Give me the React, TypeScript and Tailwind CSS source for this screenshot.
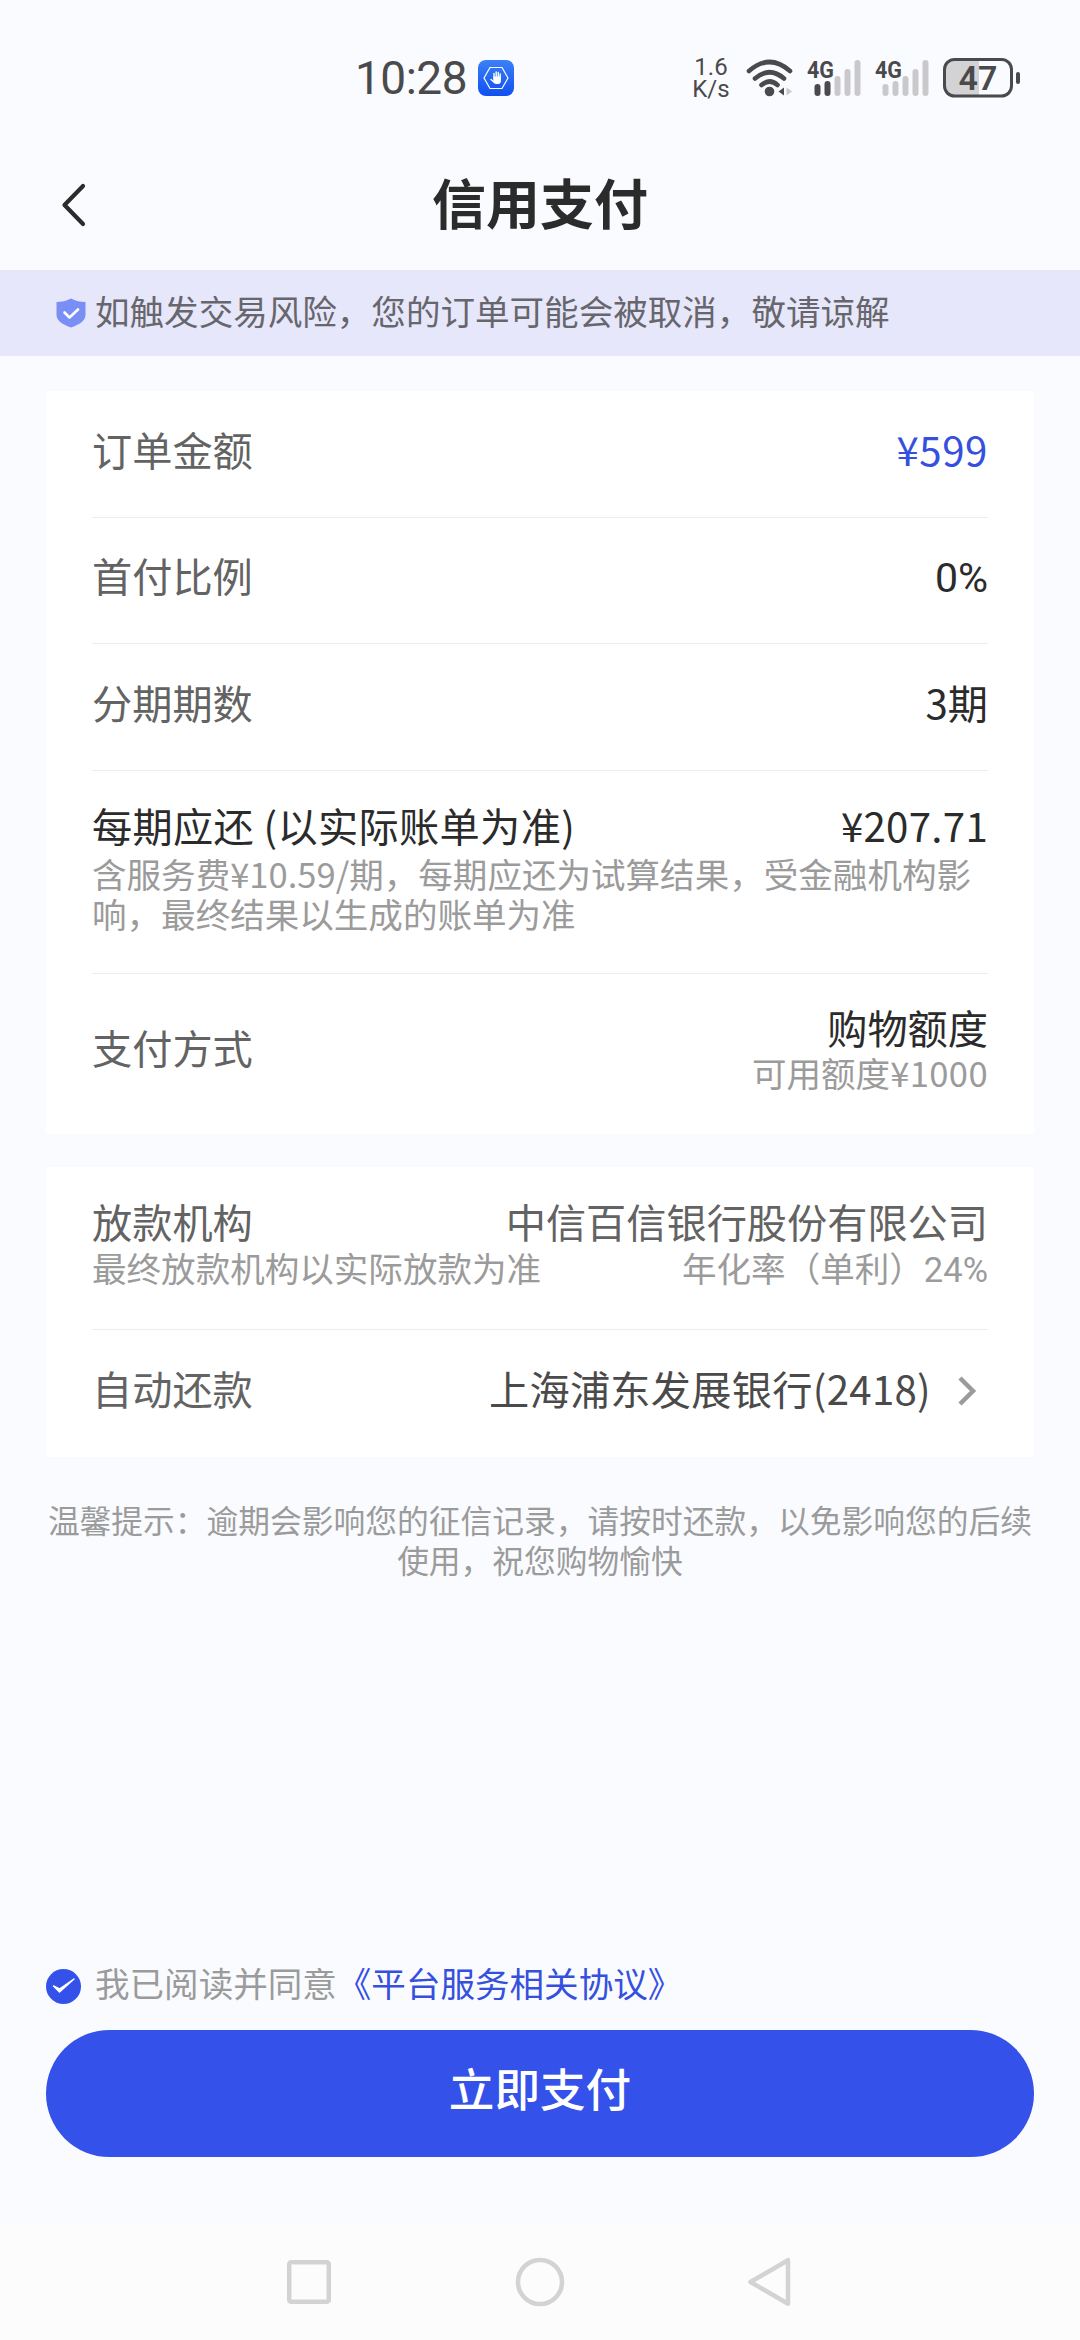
import type { ReactNode } from "react";

const DETAILS = [
  { label: "订单金额", value: "¥599", style: "text-[#3550de] tracking-[0.6px]" },
  { label: "首付比例", value: "0%", style: "pt-[5px] text-[#2b2b2b] text-[41px] font-[Roboto,sans-serif]" },
  { label: "分期期数", value: "3期", style: "text-[#2b2b2b]" },
];

const SIGNALS = [
  { id: "sim1", active: 2 },
  { id: "sim2", active: 0 },
];

const BARS = [12, 15, 20, 27, 36];

function Signal({ active }: { active: number }) {
  return (
    <svg className="overflow-visible" width="54" height="38" viewBox="0 0 54 38">
      <text
        x="0"
        y="19"
        fontSize="24"
        fontWeight="700"
        textLength="27"
        lengthAdjust="spacingAndGlyphs"
        fill="#4a4a4c"
      >
        4G
      </text>
      {BARS.map((h, i) => (
        <rect
          key={h}
          x={7.5 + i * 10}
          y={37 - h}
          width="6"
          height={h}
          rx="3"
          fill={i < active ? "#4a4a4c" : "#c9c9cb"}
        />
      ))}
    </svg>
  );
}

function StatusBar() {
  return (
    <div className="flex h-[135px] items-start pt-[56px] pl-[355px] text-[#4a4a4c] font-[Roboto,sans-serif]">
      <div className="flex h-[44px] w-[123px] items-center text-[46px] leading-none tracking-[-0.5px]">
        10:28
      </div>
      <svg className="mt-1" width="36" height="36" viewBox="0 0 36 36">
        <defs>
          <linearGradient id="app" x1="0" y1="0" x2="0" y2="1">
            <stop offset="0" stopColor="#3a80f8" />
            <stop offset="1" stopColor="#1050f0" />
          </linearGradient>
        </defs>
        <rect width="36" height="36" rx="8" fill="url(#app)" />
        <path d="M12 7.5h12l6 10.5-6 10.5H12L6 18z" fill="none" stroke="#fff" strokeWidth="1.2" />
        <path
          d="M16 18v-4.5M18.2 17v-5M20.3 17.5v-5M22.2 19v-5M13 19.5l3.5 3"
          stroke="#fff"
          strokeWidth="1.4"
          strokeLinecap="round"
        />
        <path d="M15.3 16.5h7.6v4.5q0 3-3 3h-1.7q-1.5 0-3-2z" fill="#fff" />
      </svg>
      <div className="ml-[178px] w-[38px] text-center text-[24px] leading-[22px]">
        <div>1.6</div>
        <div>K/s</div>
      </div>
      <svg className="ml-[16px] mt-[2px]" width="48" height="40" viewBox="0 0 48 40">
        <g fill="none" stroke="#4a4a4c" strokeWidth="4.6" strokeLinecap="round">
          <path d="M3 13q20.500-18 41 0" />
          <path d="M9 20.500q14.500-12.500 29 0" />
          <path d="M15.500 27q8-7 16 0" />
        </g>
        <circle cx="23.5" cy="33.5" r="4.8" fill="#4a4a4c" />
        <path d="M38 29.500v8l-5.500-4z" fill="#4a4a4c" />
        <path d="M40.500 29.500v8l5.500-4z" fill="#c9c9cb" />
      </svg>
      <div className="mt-[3px] ml-[13px] flex gap-[14px]">
        {SIGNALS.map((s) => (
          <Signal key={s.id} active={s.active} />
        ))}
      </div>
      <svg className="ml-[14px] mt-[2px]" width="80" height="40" viewBox="0 0 80 40">
        <path d="M12 2h24v36H12Q2 38 2 28V12Q2 2 12 2z" fill="#d3d3d5" />
        <rect x="1.5" y="1.5" width="67" height="36.5" rx="10" fill="none" stroke="#4a4a4c" strokeWidth="3" />
        <rect x="73" y="14" width="4" height="12" rx="2" fill="#4a4a4c" />
        <text x="35" y="32" fontSize="34" fontWeight="600" textAnchor="middle" fill="#4a4a4c">
          47
        </text>
      </svg>
    </div>
  );
}

function Header() {
  return (
    <header className="flex h-[135px] items-center justify-between px-[60px] text-[#2b2b2b]">
      <svg className="mt-[5px]" width="28" height="46" viewBox="0 0 28 46">
        <path
          d="M23 4L4.500 23 23 42"
          fill="none"
          stroke="currentColor"
          strokeWidth="4.2"
          strokeLinecap="round"
          strokeLinejoin="round"
        />
      </svg>
      <h1 className="pb-px text-[54px] leading-[70px] font-bold">信用支付</h1>
      <div className="w-[28px]" />
    </header>
  );
}

function Row({ className, children }: { className: string; children: ReactNode }) {
  return (
    <div className={`flex justify-between border-[#ececec] not-last:border-b ${className}`}>
      {children}
    </div>
  );
}

function Note({ children }: { children: ReactNode }) {
  return <div className="text-[34.55px] leading-[40px] text-[#9b9b9b]">{children}</div>;
}

export default function App() {
  return (
    <div className="flex h-[2340px] w-[1080px] flex-col overflow-hidden bg-[#fafbff] font-['Noto_Sans_CJK_SC',sans-serif]">
      <StatusBar />
      <Header />

      <div className="flex h-[86px] items-center bg-[#e6e7fa] pl-[55px] text-[34.55px] text-[#66666c]">
        <svg width="31" height="30" viewBox="0 0 31 30">
          <path d="M16 .5q6.500 3.500 14.500 3.500v13q0 7.500-14.500 12.500Q1.500 24.500 1.500 17V4Q9.500 4 16 .5z" fill="#7a8ff6" />
          <path
            d="M9.500 14.500l5 5 8.500-8"
            fill="none"
            stroke="#fff"
            strokeWidth="2.6"
            strokeLinecap="round"
            strokeLinejoin="round"
          />
        </svg>
        <span className="mb-[6px] ml-[9px] leading-[50px]">如触发交易风险，您的订单可能会被取消，敬请谅解</span>
      </div>

      <main className="mt-[35px] flex flex-col px-[46px] text-[40.2px] leading-[50px] text-[#636363]">
        <section className="bg-white px-[46px] whitespace-nowrap">
          {DETAILS.map((d) => (
            <Row key={d.label} className="h-[126.6px] items-center pb-[10px]">
              <span>{d.label}</span>
              <span className={d.style}>{d.value}</span>
            </Row>
          ))}
          <Row className="h-[203px] flex-col pt-[29px]">
            <div className="flex justify-between text-[#2b2b2b]">
              <span className="tracking-[0.35px]">每期应还 (以实际账单为准)</span>
              <span className="tracking-[0.3px]">¥207.71</span>
            </div>
            <div className="flex-1 pt-[3px] whitespace-normal">
              <Note>含服务费¥10.59/期，每期应还为试算结果，受金融机构影响，最终结果以生成的账单为准</Note>
            </div>
          </Row>
          <Row className="h-[160px] items-center pb-[14px]">
            <span>支付方式</span>
            <div className="text-right">
              <div className="text-[#2b2b2b]">购物额度</div>
              <Note>
                可用额度<span className="tracking-[0.4px]">¥1000</span>
              </Note>
            </div>
          </Row>
        </section>

        <section className="mt-[33px] bg-white px-[46px] whitespace-nowrap">
          <Row className="h-[163px] flex-col pt-[29px]">
            <div className="flex justify-between">
              <span>放款机构</span>
              <span>中信百信银行股份有限公司</span>
            </div>
            <div className="flex-1 pt-px">
              <Note>
                <div className="flex justify-between">
                  <span>最终放款机构以实际放款为准</span>
                  <span>
                    年化率（单利）<span className="font-[Roboto,sans-serif]">24%</span>
                  </span>
                </div>
              </Note>
            </div>
          </Row>
          <Row className="h-[127px] items-center pb-[10px]">
            <span>自动还款</span>
            <div className="flex items-center pr-[10px] text-[#4a4a4a]">
              <span className="tracking-[0.3px]">上海浦东发展银行(2418)</span>
              <svg className="mt-[5px] ml-[25px]" width="22" height="32" viewBox="0 0 22 32">
                <path d="M4 3l13 13L4 29" fill="none" stroke="#9b9b9b" strokeWidth="4.5" />
              </svg>
            </div>
          </Row>
        </section>

        <p className="mt-[42px] text-center text-[31.75px] leading-[40px] text-[#9b9b9b]">
          温馨提示：逾期会影响您的征信记录，请按时还款，以免影响您的后续使用，祝您购物愉快
        </p>
      </main>

      <footer className="mt-auto flex flex-col px-[46px] pb-[68px]">
        <div className="mb-[23px] flex h-[50px] items-center text-[34.55px] leading-[50px] text-[#9b9b9b]">
          <svg className="mt-[8px] mr-[14px]" width="35" height="35" viewBox="0 0 35 35">
            <circle cx="17.5" cy="17.5" r="17.5" fill="#3452ea" />
            <path d="M7.500 17l6 6L28 10 13.500 20z" fill="#fff" stroke="#fff" strokeWidth="1.5" strokeLinejoin="round" />
          </svg>
          <span>我已阅读并同意</span>
          <span className="text-[#3550de]">《平台服务相关协议》</span>
        </div>
        <button className="h-[127px] rounded-full bg-[#3452ea] pb-[12px] text-[45.6px] font-medium text-white">
          立即支付
        </button>
      </footer>

      <nav className="flex h-[115px] items-center justify-center gap-[182px] bg-[#fcfcfc] pb-[2px]">
        <svg width="48" height="50" viewBox="0 0 48 50">
          <rect x="4.2" y="5.2" width="39.6" height="39.6" rx="2" fill="none" stroke="#d3d3d3" strokeWidth="4.5" />
        </svg>
        <svg width="50" height="50" viewBox="0 0 50 50">
          <circle cx="25" cy="25" r="22" fill="none" stroke="#d3d3d3" strokeWidth="4.5" />
        </svg>
        <svg width="48" height="50" viewBox="0 0 48 50">
          <path d="M41 3.200v43.600L3.500 25z" fill="none" stroke="#d3d3d3" strokeWidth="4.5" strokeLinejoin="round" />
        </svg>
      </nav>
    </div>
  );
}
